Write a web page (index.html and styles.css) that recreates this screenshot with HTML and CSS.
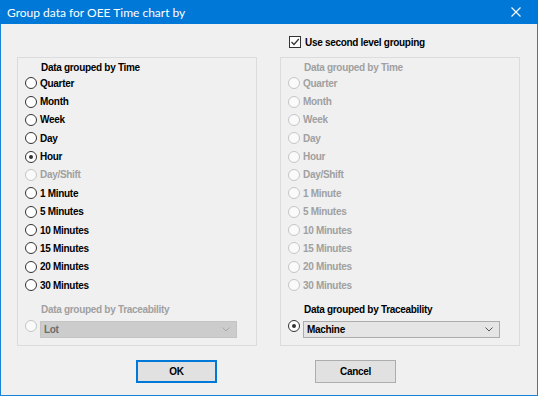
FILE: index.html
```html
<!DOCTYPE html>
<html lang="en">
<head>
  <meta charset="UTF-8">
  <title>Group data for OEE Time chart by</title>
  <link rel="stylesheet" href="styles.css">
</head>
<body>

  <div class="window">
    <!-- Title bar -->
    <div class="titlebar">
      <span class="title">Group data for OEE Time chart by</span>
      <span class="close">
        <svg width="10" height="10" viewBox="0 0 10 10">
          <path d="M0.5 0.5 L9.5 9.5 M9.5 0.5 L0.5 9.5" stroke="#fff" stroke-width="1.1" fill="none"/>
        </svg>
      </span>
    </div>

    <div class="dialog">
      <!-- Second level switch -->
      <div class="top-row">
        <label class="check">
          <span class="checkbox checked">
            <svg width="10" height="10" viewBox="0 0 10 10">
              <path d="M1.5 5 L4 7.5 L8.8 2" stroke="#333" stroke-width="1.2" fill="none"/>
            </svg>
          </span>
          Use second level grouping
        </label>
      </div>

      <div class="groups">
        <!-- First level -->
        <div class="group">
          <div class="group-label">Data grouped by Time</div>
          <ul class="options">
            <li><span class="radio"></span>Quarter</li>
            <li><span class="radio"></span>Month</li>
            <li><span class="radio"></span>Week</li>
            <li><span class="radio"></span>Day</li>
            <li><span class="radio checked"></span>Hour</li>
            <li class="disabled"><span class="radio"></span>Day/Shift</li>
            <li><span class="radio"></span>1 Minute</li>
            <li><span class="radio"></span>5 Minutes</li>
            <li><span class="radio"></span>10 Minutes</li>
            <li><span class="radio"></span>15 Minutes</li>
            <li><span class="radio"></span>20 Minutes</li>
            <li><span class="radio"></span>30 Minutes</li>
          </ul>
          <div class="trace disabled">
            <div class="group-label">Data grouped by Traceability</div>
            <div class="trace-row">
              <span class="radio"></span>
              <div class="combo">
                <span>Lot</span>
                <svg width="8" height="5" viewBox="0 0 8 5">
                  <path d="M0.5 0.5 L4 4 L7.5 0.5" stroke="#a8a8a8" stroke-width="1" fill="none"/>
                </svg>
              </div>
            </div>
          </div>
        </div>

        <!-- Second level -->
        <div class="group">
          <div class="group-label disabled">Data grouped by Time</div>
          <ul class="options disabled">
            <li><span class="radio"></span>Quarter</li>
            <li><span class="radio"></span>Month</li>
            <li><span class="radio"></span>Week</li>
            <li><span class="radio"></span>Day</li>
            <li><span class="radio"></span>Hour</li>
            <li><span class="radio"></span>Day/Shift</li>
            <li><span class="radio"></span>1 Minute</li>
            <li><span class="radio"></span>5 Minutes</li>
            <li><span class="radio"></span>10 Minutes</li>
            <li><span class="radio"></span>15 Minutes</li>
            <li><span class="radio"></span>20 Minutes</li>
            <li><span class="radio"></span>30 Minutes</li>
          </ul>
          <div class="trace">
            <div class="group-label">Data grouped by Traceability</div>
            <div class="trace-row">
              <span class="radio checked"></span>
              <div class="combo">
                <span>Machine</span>
                <svg width="8" height="5" viewBox="0 0 8 5">
                  <path d="M0.5 0.5 L4 4 L7.5 0.5" stroke="#555" stroke-width="1" fill="none"/>
                </svg>
              </div>
            </div>
          </div>
        </div>
      </div>

      <!-- Buttons -->
      <div class="buttons">
        <button class="default">OK</button>
        <button>Cancel</button>
      </div>
    </div>
  </div>

</body>
</html>
```

FILE: styles.css
```css
body {
  margin: 0;
  padding: 0;
  font-family: "Liberation Sans", Arial, sans-serif;
  font-size: 10px;
  font-weight: bold;
  letter-spacing: -0.3px;
  color: #000;
}
.window {
  width: 538px;
  height: 396px;
  box-sizing: border-box;
  border: 1px solid #1883d7;
  border-top: none;
  background-color: #f0f0f0;
  display: flex;
  flex-direction: column;
}
.titlebar {
  height: 24px;
  margin: 0 -1px;
  background-color: #0078d7;
  color: white;
  display: flex;
  align-items: center;
  justify-content: space-between;
}
.title {
  font-family: Lato, "Noto Sans", sans-serif;
  font-weight: normal;
  font-size: 12px;
  letter-spacing: 0;
  padding-left: 7px;
}
.close {
  width: 46px;
  height: 24px;
  display: flex;
  align-items: center;
  justify-content: center;
  margin-right: -1px;
}
.dialog {
  flex-grow: 1;
}
.top-row {
  height: 33px;
  box-sizing: border-box;
  padding: 11px 0 0 288px;
}
.check {
  display: flex;
  align-items: center;
  height: 14px;
}
.checkbox {
  width: 12px;
  height: 12px;
  box-sizing: border-box;
  border: 1px solid #333;
  background-color: white;
  margin-right: 4px;
  display: flex;
  align-items: center;
  justify-content: center;
}
.groups {
  display: flex;
  gap: 23px;
  padding-left: 16px;
}
.group {
  width: 240px;
  height: 289px;
  box-sizing: border-box;
  border: 1px solid #dcdcdc;
  padding-top: 4px;
}
.group-label {
  line-height: 12px;
  padding-left: 23px;
}
.options {
  list-style: none;
  margin: 0;
  padding: 0 0 0 7px;
}
.options li {
  height: 18.36px;
  display: flex;
  align-items: center;
}
.radio {
  width: 12px;
  height: 12px;
  box-sizing: border-box;
  border: 1px solid #333;
  border-radius: 50%;
  background-color: white;
  margin-right: 3px;
  flex-shrink: 0;
  display: flex;
  align-items: center;
  justify-content: center;
}
.radio.checked::after {
  content: "";
  width: 4px;
  height: 4px;
  border-radius: 50%;
  background-color: #333;
}
.disabled,
.options .disabled {
  color: #a0a0a0;
}
.disabled .radio {
  border-color: #c5c5c5;
  background-color: #fafafa;
}
.trace {
  margin-top: 10px;
}
.trace-row {
  display: flex;
  align-items: flex-start;
  margin-top: 5px;
  padding-left: 7px;
}
.trace-row .radio {
  margin-top: -1px;
  margin-right: 3px;
}
.combo {
  width: 197px;
  height: 17px;
  box-sizing: border-box;
  border: 1px solid #acacac;
  background-color: #e5e5e5;
  color: #000;
  padding: 0 6px 0 3px;
  display: flex;
  align-items: center;
  justify-content: space-between;
}
.disabled .combo {
  border-color: #c4c4c4;
  background-color: #cccccc;
  color: #6d6d6d;
}
.buttons {
  display: flex;
  gap: 98px;
  padding-left: 135px;
  margin-top: 14px;
}
button {
  width: 81px;
  height: 23px;
  box-sizing: border-box;
  border: 1px solid #adadad;
  background-color: #e1e1e1;
  font-family: "Liberation Sans", Arial, sans-serif;
  font-size: 10px;
  font-weight: bold;
  letter-spacing: -0.3px;
  color: #000;
  padding: 0;
}
button.default {
  border: 2px solid #0078d7;
}
```
